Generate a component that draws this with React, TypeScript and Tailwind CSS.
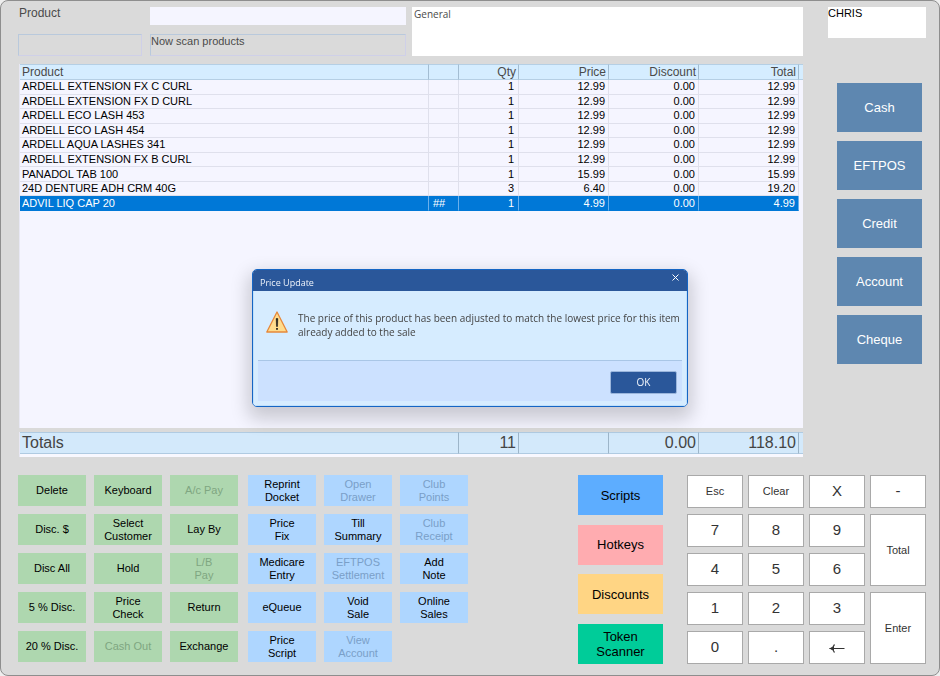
import React from "react";

type Line = {
  product: string;
  flag?: string;
  qty: string;
  price: string;
  discount: string;
  total: string;
  selected?: boolean;
};

const lines: Line[] = [
  { product: "ARDELL EXTENSION FX C CURL", qty: "1", price: "12.99", discount: "0.00", total: "12.99" },
  { product: "ARDELL EXTENSION FX D CURL", qty: "1", price: "12.99", discount: "0.00", total: "12.99" },
  { product: "ARDELL ECO LASH 453", qty: "1", price: "12.99", discount: "0.00", total: "12.99" },
  { product: "ARDELL ECO LASH 454", qty: "1", price: "12.99", discount: "0.00", total: "12.99" },
  { product: "ARDELL AQUA LASHES 341", qty: "1", price: "12.99", discount: "0.00", total: "12.99" },
  { product: "ARDELL EXTENSION FX B CURL", qty: "1", price: "12.99", discount: "0.00", total: "12.99" },
  { product: "PANADOL TAB 100", qty: "1", price: "15.99", discount: "0.00", total: "15.99" },
  { product: "24D DENTURE ADH CRM 40G", qty: "3", price: "6.40", discount: "0.00", total: "19.20" },
  { product: "ADVIL LIQ CAP 20", flag: "##", qty: "1", price: "4.99", discount: "0.00", total: "4.99", selected: true },
];

type Action = { label: string; off?: boolean };

const saleActions: Action[] = [
  { label: "Delete" }, { label: "Keyboard" }, { label: "A/c Pay", off: true },
  { label: "Disc. $" }, { label: "Select\nCustomer" }, { label: "Lay By" },
  { label: "Disc All" }, { label: "Hold" }, { label: "L/B\nPay", off: true },
  { label: "5 % Disc." }, { label: "Price\nCheck" }, { label: "Return" },
  { label: "20 % Disc." }, { label: "Cash Out", off: true }, { label: "Exchange" },
];

const tillActions: Action[] = [
  { label: "Reprint\nDocket" }, { label: "Open\nDrawer", off: true }, { label: "Club\nPoints", off: true },
  { label: "Price\nFix" }, { label: "Till\nSummary" }, { label: "Club\nReceipt", off: true },
  { label: "Medicare\nEntry" }, { label: "EFTPOS\nSettlement", off: true }, { label: "Add\nNote" },
  { label: "eQueue" }, { label: "Void\nSale" }, { label: "Online\nSales" },
  { label: "Price\nScript" }, { label: "View\nAccount", off: true },
];

const modes = [
  { label: "Scripts", color: "bg-[#5dadff]" },
  { label: "Hotkeys", color: "bg-[#ffacb0]" },
  { label: "Discounts", color: "bg-[#ffd584]" },
  { label: "Token\nScanner", color: "bg-[#00cc99]" },
];

const payments = ["Cash", "EFTPOS", "Credit", "Account", "Cheque"];

const keys = ["Esc", "Clear", "X", "-", "7", "8", "9", "Total", "4", "5", "6", "1", "2", "3", "Enter", "0", ".", "back"];

function Columns() {
  return (
    <colgroup>
      <col />
      <col className="w-[30px]" />
      <col className="w-[60px]" />
      <col className="w-[90px]" />
      <col className="w-[90px]" />
      <col className="w-[100px]" />
      <col className="w-1" />
    </colgroup>
  );
}

function SaleTable() {
  const head = "border-r border-[#a3bdd2] px-[2px] font-normal";
  return (
    <table className="h-[147px] w-full table-fixed border-separate border-spacing-0 text-[11px] leading-[13px]">
      <Columns />
      <thead className="h-4 bg-[#d5edff] text-xs leading-[13px] text-[#4a4a4a]">
        <tr className="*:border-y *:border-y-[#b5cfe4]">
          <th scope="col" className={`${head} text-left`}>Product</th>
          <th scope="col" aria-label="Flag" className={head} />
          <th scope="col" className={`${head} text-right`}>Qty</th>
          <th scope="col" className={`${head} text-right`}>Price</th>
          <th scope="col" className={`${head} text-right`}>Discount</th>
          <th scope="col" className={`${head} text-right`}>Total</th>
          <td />
        </tr>
      </thead>
      <tbody>
        {lines.map((l) => {
          const cell = l.selected
            ? "border-r border-b border-r-[#6bb0ec] border-b-[#0078d7] bg-[#0078d7] text-white py-0"
            : "border-r border-b border-[#dfe0ec] text-black py-0";
          return (
            <tr key={l.product}>
              <td className={`${cell} px-[2px]`}>{l.product}</td>
              <td className={`${cell} px-1`}>{l.flag}</td>
              <td className={`${cell} px-1 text-right`}>{l.qty}</td>
              <td className={`${cell} px-[3px] text-right`}>{l.price}</td>
              <td className={`${cell} px-[3px] text-right`}>{l.discount}</td>
              <td className={`${cell} px-[3px] text-right`}>{l.total}</td>
              <td />
            </tr>
          );
        })}
      </tbody>
    </table>
  );
}

function TotalsTable() {
  const cell = "border-y border-r border-y-[#b0cbe2] border-r-[#9db5c9] px-[2px]";
  return (
    <table className="w-full table-fixed border-separate border-spacing-0 bg-[#d3e9fb] text-base leading-5 text-[#444]">
      <Columns />
      <tbody>
        <tr>
          <th scope="row" colSpan={2} className={`${cell} text-left font-normal`}>Totals</th>
          <td className={`${cell} text-right`}>11</td>
          <td className={cell} />
          <td className={`${cell} text-right`}>0.00</td>
          <td className={`${cell} text-right`}>118.10</td>
          <td className="border-y border-[#b0cbe2]" />
        </tr>
      </tbody>
    </table>
  );
}

function ActionGrid({ actions, tone }: { actions: Action[]; tone: "green" | "blue" }) {
  const on = tone === "green" ? "bg-[#aed7af] text-black" : "bg-[#aed6ff] text-black";
  const off = tone === "green" ? "bg-[#aed7af] text-[#7fa681]" : "bg-[#aed6ff] text-[#7a9fc8]";
  return (
    <div className="grid auto-rows-[31px] grid-cols-[repeat(3,68px)] content-start gap-2">
      {actions.map((a) => (
        <button
          key={a.label}
          type="button"
          disabled={a.off}
          className={`flex items-center justify-center text-center text-[11px] leading-[13px] whitespace-pre ${a.off ? off : on}`}
        >
          {a.label}
        </button>
      ))}
    </div>
  );
}

function Keypad() {
  return (
    <div className="grid auto-rows-[33px] grid-cols-[repeat(4,56px)] gap-x-[5px] gap-y-[6px]">
      {keys.map((k) => {
        const tall = k === "Total" || k === "Enter";
        return (
          <button
            key={k}
            type="button"
            aria-label={k === "back" ? "Backspace" : undefined}
            className={`flex items-center justify-center border border-[#a9a9a9] bg-white text-[#333] ${tall ? "row-span-2" : ""} ${k.length > 1 ? "text-[11px]" : "text-[15px]"}`}
          >
            {k === "back" ? (
              <svg width="16" height="10" viewBox="0 0 16 10" fill="none" stroke="#333">
                <path d="M2 5.500H15.500" strokeWidth="1" />
                <path d="M5.500 1.500Q4.500 4.500 1.500 5.500Q4.500 6.500 5.500 9.500" strokeWidth="1.200" />
                <path d="M1 5.500L5 3.200V7.800Z" fill="#333" stroke="none" />
              </svg>
            ) : (
              k
            )}
          </button>
        );
      })}
    </div>
  );
}

function PriceDialog() {
  return (
    <div className="fixed inset-0 flex items-center justify-center">
      <div
        role="dialog"
        aria-labelledby="dialog-title"
        aria-describedby="dialog-text"
        className="w-[436px] overflow-hidden rounded-[5px] border border-[#1565c4] bg-[#d6ecff] font-['Open_Sans','Noto_Sans',sans-serif] text-[10px] shadow-[0_8px_18px_4px_rgba(0,0,0,0.18)]"
      >
        <div className="flex h-[21px] justify-between bg-[#2a579a] text-white">
          <h2 id="dialog-title" className="pt-[5px] pl-[7px] text-[9px] leading-4 text-[#eef3fa]">Price Update</h2>
          <button type="button" aria-label="Close" className="flex h-[14px] w-6 items-center justify-center">
            <svg width="7" height="7" viewBox="0 0 7 7" stroke="#fff" strokeWidth="1">
              <path d="M0.500 0.500L6.500 6.500M6.500 0.500L0.500 6.500" />
            </svg>
          </button>
        </div>
        <div className="border border-t-0 border-[#bfe0fb] px-1 pb-1">
          <div className="flex h-[69px] gap-[10px] pt-5 pl-2">
            <svg width="22" height="22" viewBox="0 0 22 22" className="shrink-0">
              <path d="M11 1L21.200 21H0.800Z" fill="#ffdc8c" stroke="#e6883a" strokeWidth="1.300" strokeLinejoin="round" />
              <path d="M10.200 7.500H11.800L11.500 15.500H10.500Z" fill="#111" stroke="#111" strokeWidth="0.500" />
              <rect x="10.200" y="17" width="1.600" height="1.800" fill="#111" />
            </svg>
            <p id="dialog-text" className="leading-[14px] text-[#444]">
              The price of this product has been adjusted to match the lowest price for this item already added to the sale
            </p>
          </div>
          <div className="flex h-[41px] items-start justify-end border-t border-[#a9c6e6] bg-[#cce1ff] pt-[10px] pr-[5px]">
            <button type="button" className="h-[23px] w-[67px] rounded-[2px] border border-[#9bb6dc] bg-[#2a579a] text-[10px] text-[#f2f6fc]">
              OK
            </button>
          </div>
        </div>
      </div>
    </div>
  );
}

export default function App() {
  return (
    <div className="bg-[#eee] font-['Liberation_Sans',Arial,sans-serif]">
      <main className="flex min-h-screen flex-col rounded-lg border border-[#8e8e8e] bg-[#dadada] pt-[6px] pr-[13px] pb-[11px] pl-[17px]">
        <div className="flex flex-1 gap-[25px]">
          <div className="flex flex-1 flex-col">
            <header className="flex h-[49px] gap-[6px] text-[11px] text-[#4a4a4a]">
              <div className="grid flex-1 grid-cols-[124px_1fr] grid-rows-[18px_22px] content-between gap-x-2">
                <label htmlFor="product" className="pl-[1px] text-xs leading-[13px]">Product</label>
                <input id="product" className="w-full bg-[#f5f5ff] px-1 outline-none" />
                <div className="border border-[#b9c9dc] border-r-[#cfd0e8] border-b-[#cfd0e8]" />
                <p role="status" className="border border-[#b9c9dc] border-r-[#cfd0e8] border-b-[#cfd0e8] leading-[13px]">Now scan products</p>
              </div>
              <textarea
                aria-label="Notes"
                defaultValue="General"
                className="w-[391px] resize-none bg-white px-[2px] font-['Open_Sans','Noto_Sans',sans-serif] text-[10px] leading-[15px] outline-none"
              />
            </header>
            <section aria-label="Sale" className="mt-2 ml-[1px] flex-1 border-l border-[#e8e8f4] bg-[#f5f5ff]">
              <SaleTable />
            </section>
            <section aria-label="Sale totals" className="mt-[4px] ml-[1px] border-l border-[#e8e8f4] bg-[#f8f8ff] pb-[3px]">
              <TotalsTable />
            </section>
          </div>
          <aside className="w-[98px]">
            <div className="h-[31px] bg-white text-[11px] leading-[13px] text-black">CHRIS</div>
            <div className="mt-[45px] flex flex-col gap-[9px] px-[9px]">
              {payments.map((p) => (
                <button key={p} type="button" className="h-[49px] w-[85px] bg-[#5e87b0] text-[13px] text-white">{p}</button>
              ))}
            </div>
          </aside>
        </div>
        <div className="mt-[18px] flex gap-[10px]">
          <ActionGrid actions={saleActions} tone="green" />
          <ActionGrid actions={tillActions} tone="blue" />
          <div className="mr-[14px] ml-auto flex flex-col justify-between">
            {modes.map((m) => (
              <button key={m.label} type="button" className={`h-10 w-[85px] text-[13px] leading-[15px] whitespace-pre text-black ${m.color}`}>
                {m.label}
              </button>
            ))}
          </div>
          <Keypad />
        </div>
      </main>
      <PriceDialog />
    </div>
  );
}
